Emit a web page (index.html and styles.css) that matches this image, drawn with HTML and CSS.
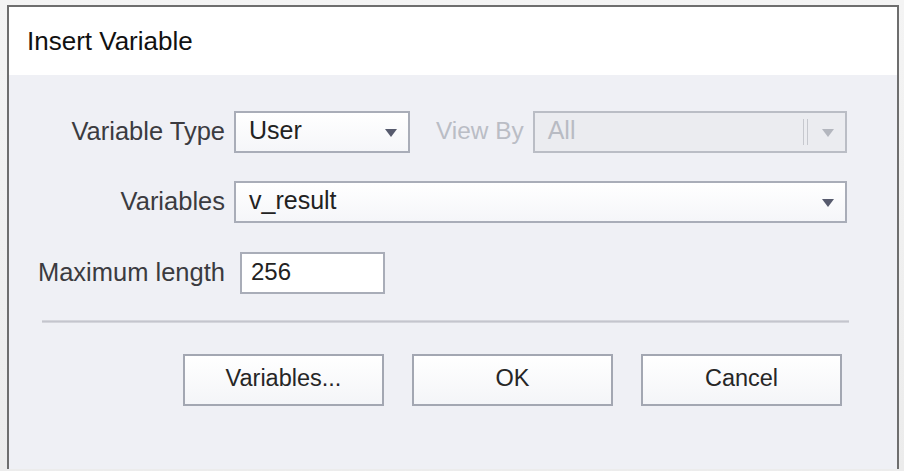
FILE: index.html
```html
<!DOCTYPE html>
<html lang="en">
<head>
<meta charset="utf-8">
<title>Insert Variable</title>
<link rel="stylesheet" href="styles.css">
</head>
<body>
<div class="dialog">
  <div class="titlebar"><span class="title">Insert Variable</span></div>
  <div class="content">
    <div class="row row-type">
      <label class="label">Variable Type</label>
      <div class="combo combo-type">
        <span class="value">User</span>
        <span class="arrow"></span>
      </div>
      <label class="label-disabled">View By</label>
      <div class="combo combo-disabled">
        <span class="value">All</span>
        <span class="grip"></span>
        <span class="arrow"></span>
      </div>
    </div>
    <div class="row row-vars">
      <label class="label">Variables</label>
      <div class="combo combo-vars">
        <span class="value">v_result</span>
        <span class="arrow"></span>
      </div>
    </div>
    <div class="row row-len">
      <label class="label">Maximum length</label>
      <div class="textbox"><span class="value">256</span></div>
    </div>
    <div class="separator"></div>
    <div class="buttons">
      <button class="btn">Variables...</button>
      <button class="btn">OK</button>
      <button class="btn">Cancel</button>
    </div>
  </div>
</div>
</body>
</html>
```

FILE: styles.css
```css
html, body {
  margin: 0;
  padding: 0;
  height: 100%;
}
body {
  background: linear-gradient(#f4f4f4, #ececec);
  font-family: "Liberation Sans", Arial, sans-serif;
  overflow: hidden;
}
.dialog {
  margin: 5px 5px 0 7px;
  border: 2px solid #6e6e6e;
  border-bottom: none;
  height: calc(100% - 7px);
  display: flex;
  flex-direction: column;
  box-sizing: border-box;
}
.titlebar {
  height: 68px;
  background: #ffffff;
  display: flex;
  align-items: center;
  padding-left: 18px;
  flex: none;
}
.title {
  font-size: 26px;
  color: #111;
  padding-top: 1px;
}
.content {
  flex: 1;
  background: #eff0f5;
  padding: 36px 48px 0 33px;
}
.row {
  display: flex;
  align-items: center;
  height: 42px;
  margin-right: 2px;
}
.row-vars { margin-top: 28px; }
.row-len { margin-top: 29px; }
.label {
  width: 192px;
  margin-left: -9px;
  text-align: right;
  font-size: 25.5px;
  color: #3b3b40;
  flex: none;
  white-space: nowrap;
  padding-bottom: 2px;
}
.combo {
  position: relative;
  height: 42px;
  box-sizing: border-box;
  border: 2px solid #a9adb8;
  background: linear-gradient(#ffffff, #f5f6f9);
  display: flex;
  align-items: center;
  padding-left: 13px;
  font-size: 25px;
  color: #222;
}
.combo .value { flex: 1; padding-bottom: 4px; }
.combo-type { width: 176px; margin-left: 9px; flex: none; }
.combo-vars { flex: 1; margin-left: 9px; }
.arrow {
  width: 0;
  height: 0;
  border-left: 6.5px solid transparent;
  border-right: 6.5px solid transparent;
  border-top: 8px solid #575b6e;
  margin-right: 11px;
  margin-top: 2px;
}
.label-disabled {
  margin-left: 26px;
  font-size: 24.4px;
  color: #babdc5;
  flex: none;
  white-space: nowrap;
  padding-bottom: 2px;
}
.combo-disabled {
  flex: 1;
  margin-left: 9px;
  background: #ebecf0;
  border-color: #babdc5;
  color: #b8bbc3;
}
.combo-disabled .arrow {
  border-top-color: #b3b6be;
}
.grip {
  width: 3px;
  height: 26px;
  border-left: 1px solid #c6c8ce;
  border-right: 1px solid #c6c8ce;
  margin-right: 14px;
}
.textbox {
  width: 145px;
  height: 42px;
  box-sizing: border-box;
  margin-left: 15px;
  border: 2px solid #a9adb8;
  background: #ffffff;
  display: flex;
  align-items: center;
  padding-left: 9px;
  font-size: 24px;
  color: #222;
}
.textbox .value { padding-bottom: 3px; }
.separator {
  margin-top: 26px;
  height: 3px;
  background: linear-gradient(#dcdde3, #c4c5cd, #dcdde3);
}
.buttons {
  display: flex;
  justify-content: flex-end;
  gap: 28px;
  padding-right: 7px;
  margin-top: 31px;
}
.btn {
  width: 201px;
  height: 52px;
  box-sizing: border-box;
  border: 2px solid #a3a7b2;
  background: linear-gradient(#ffffff, #f4f5f8);
  font-family: "Liberation Sans", Arial, sans-serif;
  font-size: 23.5px;
  color: #262626;
  padding: 0 0 4px;
}
```
